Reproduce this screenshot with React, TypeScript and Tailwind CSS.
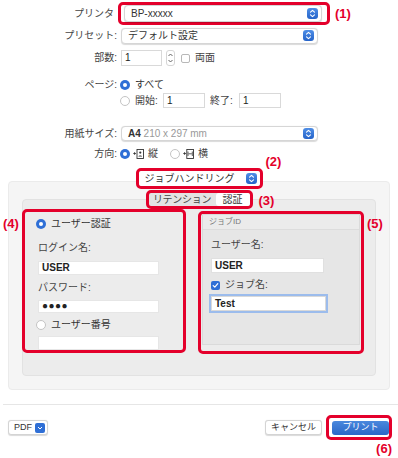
import React from "react";

const red = "border-[3px] border-[#e4002b] rounded-[5px]";

function BlueArrows({ className = "" }: { className?: string }) {
  return (
    <span className={`flex items-center justify-center w-[11px] h-[11px] rounded-[3px] bg-gradient-to-b from-[#4f8ee6] to-[#2563c9] ${className}`}>
      <svg width="7" height="9" viewBox="0 0 7 9" fill="none">
        <path d="M1.5 3.2L3.5 1.4 5.5 3.2M1.5 5.8L3.5 7.6 5.5 5.8" stroke="white" strokeWidth="1.1" strokeLinecap="round" strokeLinejoin="round" />
      </svg>
    </span>
  );
}

function Select({ children, className = "" }: { children: React.ReactNode; className?: string }) {
  return (
    <div className={`flex items-center justify-between bg-white rounded-[4px] border border-[#d6d6d6] shadow-[0_0.5px_1px_rgba(0,0,0,0.15)] pl-[6px] pr-[3px] text-[10px] text-[#333] ${className}`}>
      <span className="leading-none">{children}</span>
      <BlueArrows />
    </div>
  );
}

function Radio({ on = false }: { on?: boolean }) {
  return on ? (
    <span className="flex shrink-0 items-center justify-center w-[10px] h-[10px] rounded-full bg-[#2f6fd6]">
      <span className="block w-[4px] h-[4px] rounded-full bg-white" />
    </span>
  ) : (
    <span className="block shrink-0 w-[10px] h-[10px] rounded-full bg-white border border-[#c4c4c4]" />
  );
}

function Field({ value, className = "" }: { value?: string; className?: string }) {
  return (
    <div className={`flex items-center bg-white border border-[#d9d9d9] px-[3px] text-[10px] text-[#222] leading-none ${className}`}>
      {value}
    </div>
  );
}

function Label({ children, w = "w-[121px]" }: { children: React.ReactNode; w?: string }) {
  return <div className={`${w} shrink-0 text-right pr-[4px] text-[10px] text-[#444] leading-none`}>{children}</div>;
}

function Mark({ n, className = "" }: { n: number; className?: string }) {
  return <span className={`text-[13px] font-bold text-[#e4002b] leading-none ${className}`}>({n})</span>;
}

function Portrait() {
  return (
    <svg width="11" height="10" viewBox="0 0 11 10" fill="none">
      <path d="M0.3 4.5h2.6M1.6 3.2v2.6" stroke="#333" strokeWidth="0.9" />
      <rect x="4" y="0.5" width="6.5" height="9" stroke="#333" strokeWidth="0.9" />
      <circle cx="7.25" cy="3.6" r="1.1" fill="#333" />
      <path d="M5.4 7.6c0.4-1.4 3.3-1.4 3.7 0z" fill="#333" />
    </svg>
  );
}

function Landscape() {
  return (
    <svg width="11" height="10" viewBox="0 0 11 10" fill="none">
      <path d="M0.3 4.5h2.6M1.6 3.2v2.6" stroke="#333" strokeWidth="0.9" />
      <rect x="3.8" y="0.5" width="6.7" height="9" stroke="#333" strokeWidth="0.9" />
      <path d="M5 2.5v4.5M9.3 2.5v4.5" stroke="#333" strokeWidth="0.8" />
      <path d="M5.5 4.8h3.3" stroke="#333" strokeWidth="0.8" />
    </svg>
  );
}

export default function App() {
  return (
    <div className="w-[398px] h-[458px] bg-white overflow-hidden font-['Liberation_Sans','Noto_Sans_CJK_JP',sans-serif] text-[#333]">
      {/* printer */}
      <div className="flex items-center mt-[2px] h-[23px]">
        <Label w="w-[118px]">プリンタ</Label>
        <div className={`${red} w-[212px] h-[23px] pl-[3px] pr-[5px] flex items-center`}>
          <Select className="w-full h-[17px]">BP-xxxxx</Select>
        </div>
        <Mark n={1} className="ml-[5px]" />
      </div>

      {/* preset */}
      <div className="flex items-center mt-[3px] h-[15px]">
        <Label>プリセット:</Label>
        <Select className="w-[197px] h-[16px]">デフォルト設定</Select>
      </div>

      {/* copies */}
      <div className="flex items-center mt-[7px] h-[16px]">
        <Label>部数:</Label>
        <Field value="1" className="w-[41px] h-[16px]" />
        <div className="ml-[4px] w-[9px] h-[16px] rounded-[3px] bg-white border border-[#d6d6d6] flex flex-col items-center justify-center">
          <svg width="7" height="12" viewBox="0 0 7 12" fill="none">
            <path d="M1.5 4L3.5 2 5.5 4M1.5 8L3.5 10 5.5 8" stroke="#555" strokeWidth="0.9" />
          </svg>
        </div>
        <span className="ml-[6px] w-[9px] h-[9px] rounded-[2px] bg-white border border-[#b8b8b8]" />
        <span className="ml-[5px] text-[10px] text-[#444] leading-none">両面</span>
      </div>

      {/* pages */}
      <div className="flex items-center mt-[13px] h-[12px]">
        <Label>ページ:</Label>
        <span className="-ml-[1px]"><Radio on /></span>
        <span className="ml-[5px] text-[10px] leading-none text-[#333]">すべて</span>
      </div>
      <div className="flex items-center mt-[2px] h-[15px]">
        <Label> </Label>
        <span className="-ml-[1px]"><Radio /></span>
        <span className="ml-[5px] w-[28px] text-[10px] leading-none text-[#444]">開始:</span>
        <Field value="1" className="w-[42px] h-[15px]" />
        <span className="ml-[5px] w-[29px] text-[10px] leading-none text-[#444]">終了:</span>
        <Field value="1" className="w-[42px] h-[15px]" />
      </div>

      {/* paper */}
      <div className="flex items-center mt-[18px] h-[15px]">
        <Label>用紙サイズ:</Label>
        <Select className="w-[197px] h-[15px]">
          <span className="text-[#333] font-bold">A4</span> <span className="text-[#999]">210 x 297 mm</span>
        </Select>
      </div>

      {/* orientation */}
      <div className="flex items-center mt-[7px] h-[11px]">
        <Label>方向:</Label>
        <span className="-ml-[1px]"><Radio on /></span>
        <span className="ml-[3px]"><Portrait /></span>
        <span className="ml-[4px] text-[10px] leading-none text-[#444]">縦</span>
        <span className="ml-[12px]"><Radio /></span>
        <span className="ml-[3px]"><Landscape /></span>
        <span className="ml-[4px] text-[10px] leading-none text-[#444]">横</span>
      </div>

      {/* job handling popup */}
      <div className="relative z-10 flex justify-center mt-[9px] h-[21px]">
        <div className={`${red} relative w-[127px] h-[21px] bg-white`}>
          <Select className="w-full h-full border-0 shadow-none pl-[5px] pr-[1px]">ジョブハンドリング</Select>
          <Mark n={2} className="absolute left-[127px] -top-[16px]" />
        </div>
      </div>

      {/* panel */}
      <div className="mx-[8px] -mt-[8px] h-[209px] rounded-[4px] bg-[#f5f5f5] border border-[#ebebeb] pt-[8px] px-[13px]">
        <div className="relative z-10 flex justify-center h-[19px]">
          <div className={`${red} relative w-[107px] h-[19px] flex items-stretch bg-[#e3e3e3] text-[10px] leading-none`}>
            <div className="flex-1 flex items-center justify-center text-[#444] tracking-[-0.3px]">リテンション</div>
            <div className="w-[34px] flex items-center justify-center bg-white rounded-[3px] text-[#333]">認証</div>
            <Mark n={3} className="absolute left-[110px] top-[1px]" />
          </div>
        </div>

        <div className="-mt-[10px] h-[177px] rounded-[4px] bg-[#ececec] border border-[#e2e2e2] pt-[9px] flex gap-[12px] pr-[10px]">
          {/* left */}
          <div className={`${red} relative -ml-px w-[164px] h-[144px] pl-[11px] pr-[24px] pt-[7px] flex flex-col text-[10px] leading-none`}>
            <Mark n={4} className="absolute -left-[22px] top-[5px]" />
            <div className="flex items-center h-[10px]">
              <Radio on />
              <span className="ml-[5px] text-[#333]">ユーザー認証</span>
            </div>
            <div className="mt-[14px] ml-[2px] text-[#444]">ログイン名:</div>
            <Field value="USER" className="mt-[8px] ml-[2px] h-[15px] w-[121px] border-[#e6e6e6] font-bold text-[#222]" />
            <div className="mt-[8px] ml-[2px] text-[#444]">パスワード:</div>
            <Field value="●●●●" className="mt-[7px] ml-[2px] h-[14px] w-[121px] border-[#e6e6e6] text-[7px] tracking-[0.5px]" />
            <div className="flex items-center mt-[7px] h-[10px]">
              <Radio />
              <span className="ml-[5px] text-[#333]">ユーザー番号</span>
            </div>
            <Field className="mt-[6px] ml-[2px] h-[15px] w-[121px] border-[#e6e6e6]" />
          </div>

          {/* right */}
          <div className={`${red} relative w-[166px] h-[143px] mt-[2px] flex flex-col pb-[6px] text-[10px] leading-none`}>
            <Mark n={5} className="absolute left-[166px] top-[3px]" />
            <div className="flex-1 flex flex-col bg-[#e6e6e6] border border-[#dadada] mx-[1px]">
              <div className="h-[15px] flex items-center px-[6px] text-[8px] text-[#777] bg-[#ebebeb] border-b border-[#dcdcdc]">ジョブID</div>
              <div className="pl-[8px] flex flex-col">
                <div className="mt-[10px] text-[#444]">ユーザー名:</div>
                <Field value="USER" className="mt-[8px] h-[15px] w-[113px] border-[#e0e0e0] font-bold" />
                <div className="flex items-center mt-[7px] h-[10px]">
                  <span className="flex items-center justify-center w-[9px] h-[9px] rounded-[2px] bg-[#2f6fd6]">
                    <svg width="7" height="7" viewBox="0 0 7 7" fill="none">
                      <path d="M1.2 3.6L2.8 5.2 5.8 1.6" stroke="white" strokeWidth="1.2" strokeLinecap="round" strokeLinejoin="round" />
                    </svg>
                  </span>
                  <span className="ml-[5px] text-[#444]">ジョブ名:</span>
                </div>
                <Field value="Test" className="mt-[6px] h-[15px] w-[115px] border-[#8db3ea] ring-2 ring-[#9cbcec] font-bold" />
              </div>
            </div>
          </div>
        </div>
      </div>

      {/* separator */}
      <div className="mt-[14px] ml-[3px] h-px bg-[#e6e6e6]" />

      {/* buttons */}
      <div className="flex items-center justify-between mt-[10px] pl-[8px] pr-[6px] h-[25px]">
        <div className="flex items-center h-[15px] w-[40px] rounded-[3px] bg-white border border-[#d4d4d4] shadow-[0_0.5px_1px_rgba(0,0,0,0.15)] pl-[5px] pr-[2px] justify-between text-[9px] text-[#333] leading-none">
          PDF
          <span className="flex items-center justify-center w-[10px] h-[10px] rounded-[2px] bg-[#2f6fd6]">
            <svg width="6" height="4" viewBox="0 0 6 4" fill="none">
              <path d="M1 1L3 3 5 1" stroke="white" strokeWidth="1" />
            </svg>
          </span>
        </div>
        <div className="flex items-center">
          <div className="flex items-center justify-center w-[57px] h-[15px] rounded-[3px] bg-white border border-[#d4d4d4] shadow-[0_0.5px_1px_rgba(0,0,0,0.15)] text-[9px] text-[#333] leading-none">
            キャンセル
          </div>
          <div className={`${red} ml-[4px] w-[66px] h-[25px] pl-[3px] pr-[0px] flex items-center`}>
            <div className="flex items-center justify-center w-[57px] h-[14px] rounded-[3px] bg-gradient-to-b from-[#4a88dd] to-[#2a67c8] text-[9px] text-white leading-none">
              プリント
            </div>
          </div>
        </div>
      </div>
      <div className="flex justify-end pr-[6px] mt-[2px]">
        <Mark n={6} />
      </div>
    </div>
  );
}
